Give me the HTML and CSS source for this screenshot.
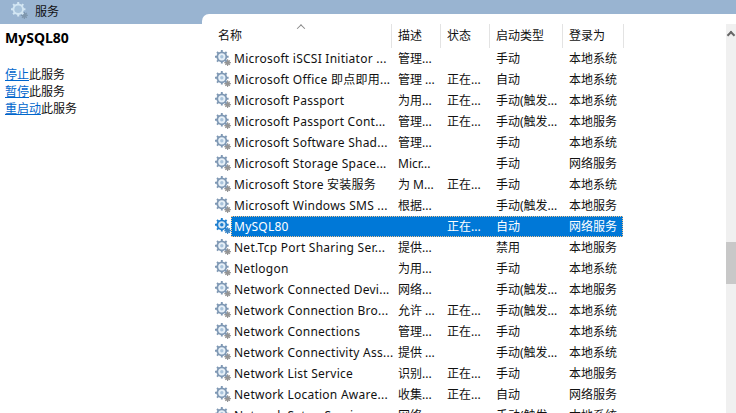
FILE: index.html
```html
<!DOCTYPE html>
<html lang="zh">
<head>
<meta charset="utf-8">
<title>服务</title>
<link rel="stylesheet" href="styles.css">
</head>
<body>
<svg class="defs" width="0" height="0" aria-hidden="true">
  <symbol id="gear" viewBox="0 0 16 16">
    <g class="g-small"><circle cx="12.6" cy="12.6" r="2.3"/><path d="M12.6 9.3v6.6M9.3 12.6h6.6M10.3 10.3l4.6 4.6M14.9 10.3l-4.6 4.6"/></g>
    <g class="g-big"><circle cx="6.8" cy="6.8" r="5.4"/><path d="M6.8 0v13.6M0 6.8h13.6M2 2l9.6 9.6M11.6 2l-9.6 9.6"/></g>
    <circle class="g-hole" cx="6.8" cy="6.8" r="3.6"/>
    <circle class="g-core" cx="6.8" cy="6.8" r="1.7"/>
  </symbol>
</svg>
<div class="app">
  <aside class="side">
    <header class="titlebar">
      <svg class="title-icon"><use href="#gear"/></svg>
      <span class="title-text">服务</span>
    </header>
    <div class="details">
      <h1 class="svc-name">MySQL80</h1>
      <p class="action"><a href="#">停止</a>此服务</p>
      <p class="action"><a href="#">暂停</a>此服务</p>
      <p class="action"><a href="#">重启动</a>此服务</p>
    </div>
  </aside>
  <main class="panel">
    <div class="list">
      <div class="head">
        <div class="hcell h-name">名称<span class="sort"></span></div>
        <div class="hcell">描述</div>
        <div class="hcell">状态</div>
        <div class="hcell">启动类型</div>
        <div class="hcell">登录为</div>
      </div>
      <div class="row"><svg class="ico"><use href="#gear"/></svg><span class="name">Microsoft iSCSI Initiator ...</span><span>管理...</span><span></span><span>手动</span><span>本地系统</span></div>
      <div class="row"><svg class="ico"><use href="#gear"/></svg><span class="name">Microsoft Office 即点即用...</span><span>管理 ...</span><span>正在...</span><span>自动</span><span>本地系统</span></div>
      <div class="row"><svg class="ico"><use href="#gear"/></svg><span class="name">Microsoft Passport</span><span>为用...</span><span>正在...</span><span>手动(触发...</span><span>本地系统</span></div>
      <div class="row"><svg class="ico"><use href="#gear"/></svg><span class="name">Microsoft Passport Cont...</span><span>管理...</span><span>正在...</span><span>手动(触发...</span><span>本地服务</span></div>
      <div class="row"><svg class="ico"><use href="#gear"/></svg><span class="name">Microsoft Software Shad...</span><span>管理...</span><span></span><span>手动</span><span>本地系统</span></div>
      <div class="row"><svg class="ico"><use href="#gear"/></svg><span class="name">Microsoft Storage Space...</span><span>Micr...</span><span></span><span>手动</span><span>网络服务</span></div>
      <div class="row"><svg class="ico"><use href="#gear"/></svg><span class="name">Microsoft Store 安装服务</span><span>为 M...</span><span>正在...</span><span>手动</span><span>本地系统</span></div>
      <div class="row"><svg class="ico"><use href="#gear"/></svg><span class="name">Microsoft Windows SMS ...</span><span>根据...</span><span></span><span>手动(触发...</span><span>本地服务</span></div>
      <div class="row selected"><svg class="ico"><use href="#gear"/></svg><span class="name">MySQL80</span><span></span><span>正在...</span><span>自动</span><span>网络服务</span></div>
      <div class="row"><svg class="ico"><use href="#gear"/></svg><span class="name">Net.Tcp Port Sharing Ser...</span><span>提供...</span><span></span><span>禁用</span><span>本地服务</span></div>
      <div class="row"><svg class="ico"><use href="#gear"/></svg><span class="name">Netlogon</span><span>为用...</span><span></span><span>手动</span><span>本地系统</span></div>
      <div class="row"><svg class="ico"><use href="#gear"/></svg><span class="name">Network Connected Devi...</span><span>网络...</span><span></span><span>手动(触发...</span><span>本地服务</span></div>
      <div class="row"><svg class="ico"><use href="#gear"/></svg><span class="name">Network Connection Bro...</span><span>允许 ...</span><span>正在...</span><span>手动(触发...</span><span>本地系统</span></div>
      <div class="row"><svg class="ico"><use href="#gear"/></svg><span class="name">Network Connections</span><span>管理...</span><span>正在...</span><span>手动</span><span>本地系统</span></div>
      <div class="row"><svg class="ico"><use href="#gear"/></svg><span class="name">Network Connectivity Ass...</span><span>提供 ...</span><span></span><span>手动(触发...</span><span>本地系统</span></div>
      <div class="row"><svg class="ico"><use href="#gear"/></svg><span class="name">Network List Service</span><span>识别...</span><span>正在...</span><span>手动</span><span>本地服务</span></div>
      <div class="row"><svg class="ico"><use href="#gear"/></svg><span class="name">Network Location Aware...</span><span>收集...</span><span>正在...</span><span>自动</span><span>网络服务</span></div>
      <div class="row"><svg class="ico"><use href="#gear"/></svg><span class="name">Network Setup Service</span><span>网络...</span><span></span><span>手动(触发...</span><span>本地系统</span></div>
    </div>
    <div class="scrollbar">
      <span class="arrow"></span>
      <span class="thumb"></span>
    </div>
  </main>
</div>
</body>
</html>
```

FILE: styles.css
```css
* { box-sizing: border-box; }
html, body { margin: 0; height: 100%; overflow: hidden; }
body {
  font: 12px/17px "Noto Sans", "Noto Sans CJK SC", sans-serif;
  color: #111;
  background: #99b4d1;
  --gear-big: #7f98b4;
  --gear-small: #949494;
  --gear-hole: #e6f0f8;
  --gear-core: #a9c3db;
}
.defs { position: absolute; }
.app { display: flex; height: 413px; overflow: hidden; }

.side { width: 202px; flex: none; display: flex; flex-direction: column; }
.titlebar { height: 24px; display: flex; align-items: flex-start; padding: 2px 0 0 11px; }
.title-icon {
  width: 17px; height: 17px; margin-right: 7px;
  --gear-big: #d3e6f3;
  --gear-small: #7f97ae;
  --gear-hole: #a9c4dc;
  --gear-core: #a9c4dc;
}
.title-text { font-size: 12px; line-height: 17px; padding-top: 1px; color: #111; }
.details { flex: 1; background: #fff; padding: 5px 5px 0; }
.svc-name { margin: 0 0 19px; font: 700 14px/18px "Noto Sans", sans-serif; color: #000; }
.action { margin: 0; height: 17px; color: #111; }
.action a { color: #0066cc; text-decoration: underline; }

.panel {
  flex: 1; margin-top: 14px; background: #fff; border-top-left-radius: 7px;
  display: flex; justify-content: space-between; overflow: hidden;
}
.list { width: 424px; padding: 10px 0 0 11px; }
.head { display: grid; grid-template-columns: 179px 49px 49px 73px 61px; height: 24px; }
.row { display: grid; grid-template-columns: 178px 49px 49px 73px 61px; }
.hcell {
  position: relative; height: 24px; padding: 3px 0 0 6px; line-height: 17px;
  border-right: 1px solid #e3e3e3; color: #111;
}
.h-name { padding-left: 5px; }
.sort {
  position: absolute; left: 85px; top: 0; width: 6px; height: 6px;
  border-left: 1px solid #888; border-top: 1px solid #888;
  transform: rotate(45deg) translate(1px, 1px);
}
.row {
  position: relative; height: 21px; line-height: 21px; white-space: nowrap; color: #111;
  width: 410px;
}
.row > span { padding-left: 7px; }
.row > .name { padding-left: 21px; letter-spacing: .25px; }
.ico { position: absolute; left: 2px; top: 2px; width: 16px; height: 16px; }
.selected {
  background: linear-gradient(#0078d7, #0078d7) 18px 0 no-repeat; color: #fff;
  --gear-big: #1f7fcf;
  --gear-small: #3b86c7;
  --gear-hole: #cfe4f5;
  --gear-core: #1f7fcf;
}
.selected::after {
  content: ""; position: absolute; left: 18px; right: 0; top: 0; bottom: 0;
  border: 1px dotted #f2c48f;
}

.g-big circle { fill: var(--gear-big); }
.g-big path { stroke: var(--gear-big); stroke-width: 1.9; fill: none; }
.g-small circle { fill: var(--gear-small); }
.g-small path { stroke: var(--gear-small); stroke-width: 1.1; fill: none; }
.g-hole { fill: var(--gear-hole); }
.g-core { fill: var(--gear-core); }

.scrollbar { position: relative; width: 10px; margin-top: 10px; background: #f0f0f0; }
.arrow {
  position: absolute; left: 2px; top: 8px; width: 6px; height: 6px;
  border-left: 2px solid #666; border-top: 2px solid #666; transform: rotate(45deg);
}
.thumb { position: absolute; left: 0; top: 218px; width: 10px; height: 42px; background: #c8c8c8; }
```
